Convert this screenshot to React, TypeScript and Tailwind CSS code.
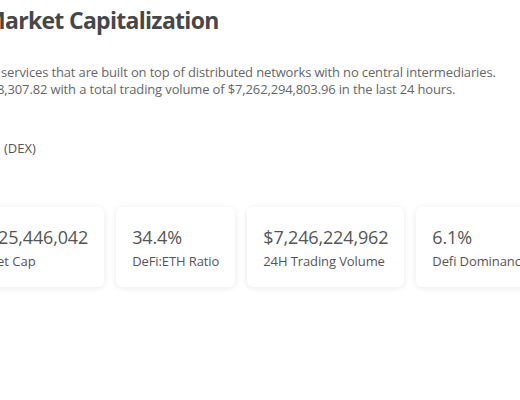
const stats = [
  { value: '34.4%', label: 'DeFi:ETH Ratio' },
  { value: '$7,246,224,962', label: '24H Trading Volume' },
  { value: '6.1%', label: 'Defi Dominance' },
  { value: 'Uniswap', label: 'Top Coin' },
];

function StatCard({ value, label }: { value: string; label: string }) {
  return (
    <div className="shrink-0 rounded-md bg-white px-4 py-4 shadow-[0_1px_6px_rgba(0,0,0,0.09)]">
      <div className="text-[18px] leading-7 tracking-[-0.15px] text-[#555]">{value}</div>
      <div className="text-[13px] leading-5 tracking-[-0.1px] text-[#555]">{label}</div>
    </div>
  );
}

export default function App() {
  return (
    <div
      className="h-[400px] w-[520px] overflow-hidden bg-white"
      style={{ fontFamily: '"Open Sans", "Noto Sans", sans-serif' }}
    >
      <h1 className="-ml-[16px] mt-[2px] whitespace-nowrap text-[23px] font-bold leading-[36px] tracking-[-0.7px] text-[#474747]">
        Market Capitalization
      </h1>

      <p className="mt-[26px] whitespace-nowrap text-[13px] leading-[17px] tracking-[-0.14px] text-[#666]">
        <span className="block pl-px">services that are built on top of distributed networks with no central intermediaries.</span>
        <span className="-ml-[3px] block">8,307.82 with a total trading volume of $7,262,294,803.96 in the last 24 hours.</span>
      </p>

      <div className="mt-[41px] pl-1 text-[13px] leading-[18px] text-[#555]">(DEX)</div>

      <div className="mt-[50px] flex gap-3 pb-6">
        <div className="-ml-[18px] shrink-0 rounded-md bg-white px-4 py-4 shadow-[0_1px_6px_rgba(0,0,0,0.09)]">
          <div className="text-[18px] leading-7 tracking-[-0.15px] text-[#555]">25,446,042</div>
          <div className="-ml-px text-[13px] leading-5 text-[#555]">et Cap</div>
        </div>
        {stats.map((s) => (
          <StatCard key={s.label} value={s.value} label={s.label} />
        ))}
      </div>
    </div>
  );
}
